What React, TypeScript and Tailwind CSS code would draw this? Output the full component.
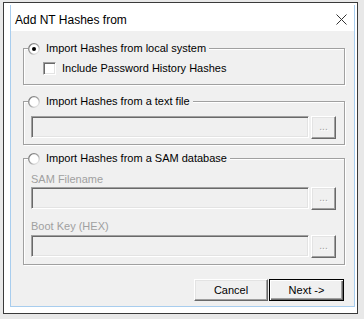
import React from "react";

function Radio({ checked }: { checked?: boolean }) {
  return (
    <svg width="12" height="12" viewBox="0 0 12 12" className="shrink-0">
      <defs>
        <linearGradient id={checked ? "rg1" : "rg0"} x1="0" y1="0" x2="1" y2="1">
          <stop offset="0" stopColor="#6e6e6e" />
          <stop offset="0.55" stopColor="#a8a8a8" />
          <stop offset="1" stopColor="#ffffff" />
        </linearGradient>
      </defs>
      <circle cx="6" cy="6" r="5.3" fill="#ffffff" stroke={checked ? "url(#rg1)" : "url(#rg0)"} strokeWidth="1.3" />
      {checked && <circle cx="6" cy="6" r="2" fill="#000000" />}
    </svg>
  );
}

function Sunken({ className = "" }: { className?: string }) {
  return (
    <div
      className={
        "h-[22px] bg-[#f0f0f0] border border-t-[#a0a0a0] border-l-[#a0a0a0] border-r-white border-b-white shadow-[inset_1px_1px_0_#696969,inset_-1px_-1px_0_#e3e3e3] " +
        className
      }
    />
  );
}

function Browse() {
  return (
    <div className="w-[25px] h-[23px] shrink-0 bg-[#f0f0f0] border border-t-white border-l-white border-r-[#696969] border-b-[#696969] shadow-[inset_-1px_-1px_0_#a0a0a0,inset_1px_1px_0_#e3e3e3] flex items-center justify-center">
      <span className="text-[10px] leading-[10px] text-[#a0a0a0] [text-shadow:1px_1px_0_#ffffff] -mt-[2px]">...</span>
    </div>
  );
}

function FieldRow() {
  return (
    <div className="flex items-start gap-[2px]">
      <Sunken className="flex-1" />
      <Browse />
    </div>
  );
}

function Group({
  label,
  checked,
  className = "",
  children,
}: {
  label: string;
  checked?: boolean;
  className?: string;
  children: React.ReactNode;
}) {
  return (
    <fieldset className="border border-[#a0a0a0] shadow-[inset_1px_1px_0_#ffffff,1px_1px_0_#ffffff]">
      <legend className="ml-[4px] pr-[3px] bg-[#f0f0f0] flex items-center gap-[6px] h-[13px] leading-[13px] text-black">
        <Radio checked={checked} />
        <span>{label}</span>
      </legend>
      <div className={className}>{children}</div>
    </fieldset>
  );
}

export default function App() {
  return (
    <div className="w-[364px] h-[319px] bg-[#e8e8e8] pt-[2px] pl-[3px] font-['Liberation_Sans',Arial,sans-serif] text-[11px] text-black overflow-hidden">
      <div className="w-[355px] h-[312px] border border-[#3a3a3a] bg-white pt-[2px] pl-[6px] pr-[2px]">
        <div className="w-[345px] h-[302px] border-x border-b border-[#a8cdee] flex flex-col">
          <div className="h-[26px] flex items-center justify-between pl-[4px] pr-[7px]">
            <span className="text-[12px] leading-[14px] mt-[3px]">Add NT Hashes from</span>
            <svg width="11" height="11" viewBox="0 0 11 11" className="mt-[3px]">
              <path d="M0.5 0.5 L10.5 10.5 M10.5 0.5 L0.5 10.5" stroke="#333333" strokeWidth="1" />
            </svg>
          </div>
          <div className="flex-1 bg-[#f0f0f0] flex flex-col pl-[12px] pr-[9px]">
            <div className="mt-[11px]">
              <Group label="Import Hashes from local system" checked className="pb-[9px]">
                <div className="flex items-center gap-[6px] pl-[19px] mt-[7px] h-[13px]">
                  <div className="w-[13px] h-[13px] bg-white border border-t-[#a0a0a0] border-l-[#a0a0a0] border-r-white border-b-white shadow-[inset_1px_1px_0_#696969,inset_-1px_-1px_0_#e3e3e3]" />
                  <span className="leading-[13px]">Include Password History Hashes</span>
                </div>
              </Group>
            </div>

            <div className="mt-[10px]">
              <Group label="Import Hashes from a text file" className="pb-[5px] pl-[7px] pr-[8px]">
                <div className="mt-[8px]">
                  <FieldRow />
                </div>
              </Group>
            </div>

            <div className="mt-[7px]">
              <Group label="Import Hashes from a SAM database" className="pb-[6px] pl-[7px] pr-[8px]">
                <div className="mt-[8px] leading-[13px] text-[#a0a0a0]">SAM Filename</div>
                <div className="mt-[1px]">
                  <FieldRow />
                </div>
                <div className="mt-[10px] leading-[13px] text-[#a0a0a0]">Boot Key (HEX)</div>
                <div className="mt-[2px]">
                  <FieldRow />
                </div>
              </Group>
            </div>

            <div className="mt-[14px] flex justify-end mr-[1px]">
              <button className="w-[74px] h-[22px] bg-[#f0f0f0] border border-t-white border-l-white border-r-[#696969] border-b-[#696969] shadow-[inset_-1px_-1px_0_#a0a0a0,inset_1px_1px_0_#e3e3e3] text-[11px] leading-[13px] text-black">
                Cancel
              </button>
              <button className="w-[75px] h-[22px] ml-[1px] bg-[#f0f0f0] border border-black shadow-[inset_1px_1px_0_#ffffff,inset_-1px_-1px_0_#696969,inset_-2px_-2px_0_#a0a0a0] text-[11px] leading-[13px] text-black">
                Next -&gt;
              </button>
            </div>
          </div>
        </div>
      </div>
    </div>
  );
}
